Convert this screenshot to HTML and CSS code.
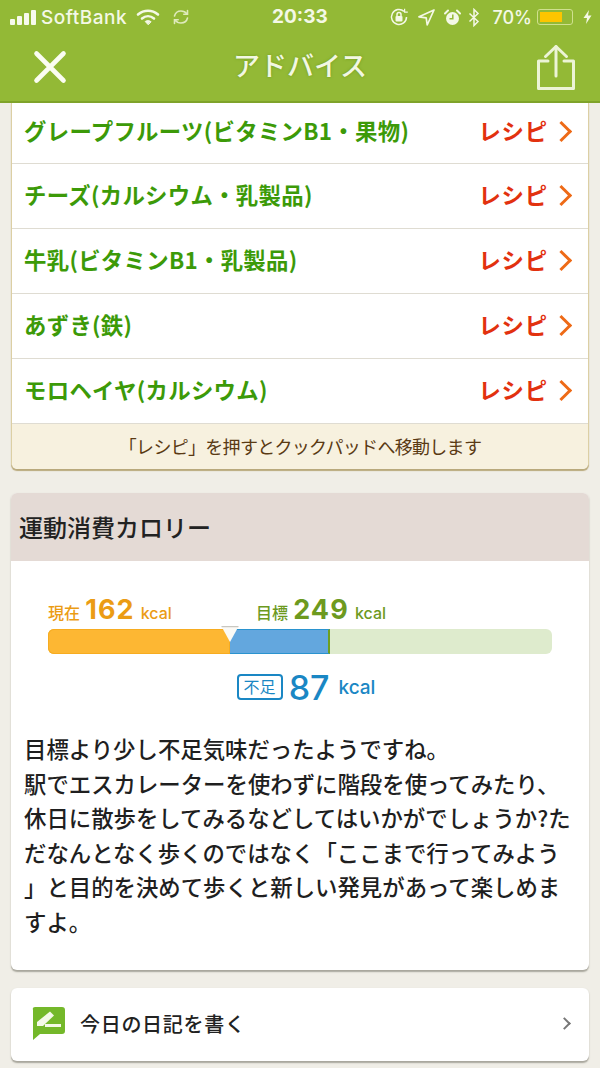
FILE: index.html
```html
<!DOCTYPE html>
<html lang="ja">
<head>
  <meta charset="UTF-8" />
  <meta name="viewport" content="width=device-width, initial-scale=1.0" />
  <title>アドバイス</title>
  <link rel="stylesheet" href="styles.css">
</head>
<body>
  <header class="top">
    <div class="status">
      <div class="status-left">
        <span class="signal"><i></i><i></i><i></i><i></i></span>
        <span class="carrier">SoftBank</span>
        <svg class="wifi" width="24" height="18" viewBox="0 0 24 18" fill="none" stroke="#f4f8e6" stroke-linecap="round">
          <path d="M2 6.500C8 1.500 16 1.500 22 6.500" stroke-width="2.600"/>
          <path d="M6 10.500C9.600 7.500 14.400 7.500 18 10.500" stroke-width="2.600"/>
          <path d="M12 16.500L9.200 13.500C10.800 12.300 13.200 12.300 14.800 13.500Z" fill="#f4f8e6" stroke-width="1"/>
        </svg>
        <svg class="sync" width="18" height="18" viewBox="0 0 18 18" fill="none" stroke="#dfeabc" stroke-width="1.600" stroke-linecap="round">
          <path d="M2.500 8C3.300 4.800 6 3 9 3C11.500 3 13.500 4 15 6"/>
          <path d="M15.500 2.500V6.300H11.800"/>
          <path d="M15.500 10C14.700 13.200 12 15 9 15C6.500 15 4.500 14 3 12"/>
          <path d="M2.500 15.500V11.700H6.200"/>
        </svg>
      </div>
      <div class="clock">20:33</div>
      <div class="status-right">
        <svg class="rotlock" width="20" height="20" viewBox="0 0 20 20" fill="none" stroke="#f4f8e6" stroke-width="1.500">
          <path d="M17.500 10A7.500 7.500 0 1 1 15 4.400"/>
          <path d="M15.600 1.800V5.200H18.800" stroke-width="1.200"/>
          <rect x="6.500" y="9" width="7" height="5.500" rx="1" fill="#f4f8e6" stroke="none"/>
          <path d="M8 9V7.500A2 2 0 0 1 12 7.500V9"/>
        </svg>
        <svg class="locate" width="17" height="17" viewBox="0 0 17 17"><path d="M16 1L1 7.800L8.200 8.800L9.200 16Z" fill="none" stroke="#f4f8e6" stroke-width="1.700" stroke-linejoin="round"/></svg>
        <svg class="alarm" width="17" height="17" viewBox="0 0 17 17">
          <circle cx="8.500" cy="9.500" r="6.500" fill="#f4f8e6"/>
          <path d="M1 4.500L4 1.500M16 4.500L13 1.500" stroke="#f4f8e6" stroke-width="2" stroke-linecap="round"/>
          <path d="M8.800 5.500V9.800H5.500" fill="none" stroke="#93b936" stroke-width="1.500"/>
        </svg>
        <svg class="bt" width="12" height="19" viewBox="0 0 11 19" fill="none" stroke="#f4f8e6" stroke-width="1.500"><path d="M1 5.500L9.500 13.500L5.500 17.500V1.500L9.500 5.500L1 13.500"/></svg>
        <span class="pct">70%</span>
        <span class="battery"><span class="battery-fill"></span></span>
        <svg width="9" height="14" viewBox="0 0 9 14"><path d="M6 0L0.500 8H4L3 14L8.500 5.500H5Z" fill="#f4f8e6"/></svg>
      </div>
    </div>
    <div class="navbar">
      <svg class="close" width="34" height="34" viewBox="0 0 34 34"><path d="M3.500 3.500L30.500 30.500M30.500 3.500L3.500 30.500" stroke="#fbfdf2" stroke-width="4.600" stroke-linecap="round"/></svg>
      <h1>アドバイス</h1>
      <svg class="share" width="40" height="48" viewBox="0 0 40 48" fill="none" stroke="#ecf4d6" stroke-width="3" stroke-linecap="round" stroke-linejoin="round">
        <path d="M12 18H2.500V45.500H37.500V18H28"/>
        <path d="M20 33V3.500"/>
        <path d="M9.500 13.500L20 3.500L30.500 13.500"/>
      </svg>
    </div>
  </header>

  <main class="content">
    <section class="card food-card">
      <ul class="foods">
        <li><span class="food">グレープフルーツ(ビタミンB1・果物)</span><a class="recipe">レシピ<span class="chev"></span></a></li>
        <li><span class="food">チーズ(カルシウム・乳製品)</span><a class="recipe">レシピ<span class="chev"></span></a></li>
        <li><span class="food">牛乳(ビタミンB1・乳製品)</span><a class="recipe">レシピ<span class="chev"></span></a></li>
        <li><span class="food">あずき(鉄)</span><a class="recipe">レシピ<span class="chev"></span></a></li>
        <li><span class="food">モロヘイヤ(カルシウム)</span><a class="recipe">レシピ<span class="chev"></span></a></li>
      </ul>
      <p class="note">「レシピ」を押すとクックパッドへ移動します</p>
    </section>

    <section class="card burn-card">
      <h2>運動消費カロリー</h2>
      <div class="burn-body">
        <div class="labels">
          <span class="now">現在 <b>162</b> <em>kcal</em></span>
          <span class="goal">目標 <b>249</b> <em>kcal</em></span>
        </div>
        <div class="bar">
          <div class="bar-now"></div>
          <div class="bar-lack"></div>
          <svg class="marker" width="18" height="17" viewBox="0 0 18 17">
            <path d="M0.500 0.500H17.500L9 16Z" fill="#fbfaf6"/>
            <path d="M0.500 0.500H17.500" stroke="#c9c7c0" stroke-width="1.500"/>
          </svg>
        </div>
        <div class="lack">
          <span class="lack-tag">不足</span>
          <b>87</b>
          <em>kcal</em>
        </div>
        <p class="advice">目標より少し不足気味だったようですね。<br>駅でエスカレーターを使わずに階段を使ってみたり、休日に散歩をしてみるなどしてはいかがでしょうか?ただなんとなく歩くのではなく「ここまで行ってみよう」と目的を決めて歩くと新しい発見があって楽しめますよ。</p>
      </div>
    </section>

    <a class="card diary">
      <svg width="33" height="33" viewBox="0 0 33 33">
        <path d="M3 0H30Q33 0 33 3V24Q33 27 30 27H8L1 33V3Q0 0 3 0Z" fill="#74b82a"/>
        <path d="M5 19V15L18 4.500L22 8.500L11 19Z" fill="#f4f9e8"/>
        <path d="M13 18.500H29" stroke="#f4f9e8" stroke-width="3"/>
      </svg>
      <span class="diary-text">今日の日記を書く</span>
      <span class="diary-chev"></span>
    </a>
  </main>
</body>
</html>
```

FILE: styles.css
```css
html, body {
  margin: 0;
  padding: 0;
  height: 1068px;
  overflow: hidden;
  background: #f0eee7;
  font-family: "Noto Sans CJK JP", "Liberation Sans", sans-serif;
}
ul, p, h1, h2 {
  margin: 0;
  padding: 0;
}
em {
  font-style: normal;
}

/* header */
.top {
  height: 101px;
  background: #93b936;
  border-bottom: 2px solid #7fa32a;
  position: relative;
  z-index: 1;
}
.status {
  height: 34px;
  display: flex;
  justify-content: space-between;
  align-items: center;
  padding: 0 8px 0 10px;
  box-sizing: border-box;
  color: #f4f8e6;
  position: relative;
}
.status-left, .status-right {
  display: flex;
  align-items: center;
}
.signal {
  display: flex;
  align-items: flex-end;
  gap: 2px;
  height: 15px;
}
.signal i {
  width: 5px;
  background: #f7faec;
  border-radius: 1px;
}
.signal i:nth-child(1) { height: 6px; }
.signal i:nth-child(2) { height: 9px; }
.signal i:nth-child(3) { height: 12px; }
.signal i:nth-child(4) { height: 15px; }
.carrier {
  font: 500 19px Inter, sans-serif;
  letter-spacing: 0.500px;
  margin-left: 5px;
}
.wifi {
  margin-left: 9px;
}
.sync {
  margin-left: 12px;
}
.clock {
  position: absolute;
  left: 272px;
  top: 5px;
  font: bold 19px Inter, sans-serif;
}
.status-right svg {
  margin-right: 9px;
}
.status-right svg:last-child {
  margin-right: 0;
}
.status-right .alarm {
  margin-right: 7px;
}
.status-right .bt {
  margin-right: 13px;
}
.pct {
  font: 500 18px Inter, sans-serif;
  margin-right: 5px;
}
.battery {
  width: 36px;
  height: 16px;
  border: 1px solid #cfe08f;
  border-radius: 3px;
  padding: 2px;
  box-sizing: border-box;
  margin-right: 10px;
  display: block;
}
.battery-fill {
  display: block;
  width: 22px;
  height: 100%;
  background: #fdc500;
}
.navbar {
  height: 67px;
  display: flex;
  justify-content: space-between;
  align-items: center;
  padding: 0 24px 0 33px;
  position: relative;
}
.navbar h1 {
  position: absolute;
  left: 0;
  right: 0;
  top: 11px;
  text-align: center;
  font-size: 27px;
  line-height: 40px;
  font-weight: 500;
  color: #f2f7e2;
  text-shadow: 0 0 3px #6f9a1c;
}
.close {
  margin-bottom: 2px;
}
.share {
  margin-bottom: 2px;
}

/* cards */
.content {
  padding: 0 11px;
}
.card {
  display: block;
  background: #fff;
  border-radius: 0 0 6px 6px;
  box-shadow: 0 1.500px 1.500px #a8a69c;
}
.food-card {
  border-left: 1px solid #dccfa4;
  border-right: 1px solid #dccfa4;
  box-shadow: 0 2px 1px #b9a97c;
  margin-top: -1px;
}
.foods {
  list-style: none;
}
.foods li {
  height: 60px;
  border-bottom: 1px solid #dfdcd2;
  display: flex;
  justify-content: space-between;
  align-items: center;
  padding: 0 17px 4px 12px;
}
.foods li:first-child {
  height: 55px;
  padding-bottom: 6px;
}
.food {
  font-size: 22.400px;
  font-weight: 700;
  letter-spacing: 0.300px;
  color: #3c9a08;
}
.recipe {
  display: flex;
  align-items: center;
  font-size: 22.400px;
  font-weight: 700;
  letter-spacing: 0.800px;
  color: #e2310f;
}
.chev {
  width: 12px;
  height: 12px;
  border-top: 3px solid #ee6a16;
  border-right: 3px solid #ee6a16;
  transform: rotate(45deg);
  margin: 3px 2px 0 6px;
}
.note {
  height: 45px;
  line-height: 44px;
  background: #f7f1df;
  border-radius: 0 0 6px 6px;
  text-align: center;
  font-size: 18px;
  letter-spacing: -0.700px;
  color: #5a3a14;
}
.burn-card {
  margin-top: 24px;
  border-radius: 6px;
  overflow: hidden;
}
.burn-card h2 {
  height: 68px;
  line-height: 68px;
  background: #e4dad5;
  padding-left: 8px;
  font-size: 24px;
  font-weight: 500;
  color: #222;
}
.burn-body {
  height: 409px;
  padding: 31px 37px 0 37px;
  box-sizing: border-box;
}
.labels {
  display: flex;
  height: 36px;
  align-items: flex-end;
  font-size: 16px;
  line-height: 30px;
  font-family: Inter, "Noto Sans CJK JP", sans-serif;
  font-weight: 500;
}
.labels span {
  display: block;
}
.labels b {
  font-size: 27px;
  font-weight: 700;
  letter-spacing: 1px;
  margin-left: 1px;
}
.labels em {
  margin-left: 2px;
}
.now {
  width: 208px;
  color: #eb9c14;
}
.goal {
  color: #6d9a1f;
}
.bar {
  height: 25px;
  background: #deebcd;
  border-radius: 6px;
  display: flex;
  position: relative;
  margin-top: 1px;
}
.bar-now {
  width: 182px;
  background: #fdb733;
  border-radius: 6px 0 0 6px;
  box-shadow: inset 0 0 0 1px #f7ac20;
}
.bar-lack {
  width: 98px;
  background: #63a7de;
  border-top: 1px solid #2a93cf;
  border-bottom: 1px solid #2a93cf;
  border-right: 2px solid #6f9f20;
  height: 23px;
}
.marker {
  position: absolute;
  left: 173px;
  top: -3px;
}
.lack {
  display: flex;
  align-items: center;
  justify-content: center;
  height: 36px;
  margin-top: 15px;
  padding-left: 12px;
  color: #1a87c4;
  font-family: Inter, "Noto Sans CJK JP", sans-serif;
}
.lack-tag {
  border: 2px solid #1a87c4;
  border-radius: 4px;
  font-size: 16px;
  line-height: 22px;
  padding: 0 5px;
}
.lack b {
  font-size: 34px;
  font-weight: 500;
  margin-left: 6px;
}
.lack em {
  font-size: 19px;
  font-weight: 500;
  margin-left: 9px;
}
.advice {
  margin: 26px -22px 0 -24px;
  font-size: 22.400px;
  line-height: 34.500px;
  font-weight: 500;
  color: #1f1f1f;
  word-break: break-all;
  line-break: anywhere;
  text-spacing-trim: space-all;
}
.diary {
  margin-top: 18px;
  height: 73px;
  border-radius: 6px;
  display: flex;
  align-items: center;
  padding: 0 19px 2px 21px;
  box-sizing: border-box;
}
.diary-text {
  margin-left: 15px;
  font-size: 20px;
  letter-spacing: 0.700px;
  font-weight: 500;
  color: #222;
  flex: 1;
}
.diary-chev {
  width: 7px;
  height: 7px;
  border-top: 2px solid #777;
  border-right: 2px solid #777;
  transform: rotate(45deg);
  margin-right: 1px;
}
```
